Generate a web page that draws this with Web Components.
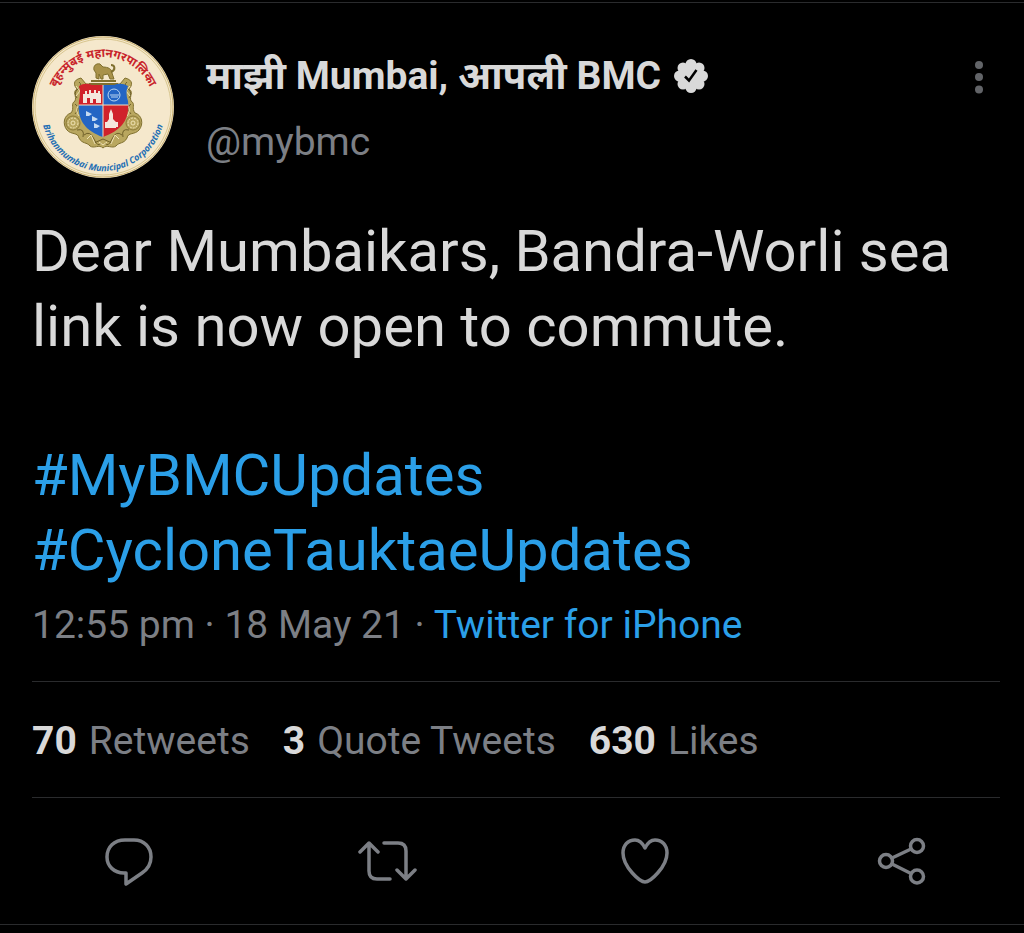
<!DOCTYPE html>
<html lang="en">
<head>
<meta charset="utf-8">
<meta name="viewport" content="width=device-width, initial-scale=1">
<title>Tweet</title>
<style>
    body {
        margin: 0;
        background: #000;
        color: #d9d9d9;
        font-family: Roboto, "Noto Sans", "Noto Sans Devanagari", sans-serif;
        --muted: #7c7f85;
        --link: #2b9fe8;
        --line: #2a2b2d;
    }
</style>
</head>
<body>
<tweet-card>
    <tweet-author slot="author" handle="@mybmc">माझी Mumbai, आपली BMC</tweet-author>
    <tweet-text slot="text">
        <p>Dear Mumbaikars, Bandra-Worli sea link is now open to commute.</p>
        <p><a href="#MyBMCUpdates">#MyBMCUpdates</a> <a href="#CycloneTauktaeUpdates">#CycloneTauktaeUpdates</a></p>
    </tweet-text>
    <tweet-meta slot="meta" source="Twitter for iPhone">12:55 pm · 18 May 21 · </tweet-meta>
    <tweet-stat slot="stats" count="70">Retweets</tweet-stat>
    <tweet-stat slot="stats" count="3">Quote Tweets</tweet-stat>
    <tweet-stat slot="stats" count="630">Likes</tweet-stat>
    <tweet-action slot="actions" icon="reply" label="Reply"></tweet-action>
    <tweet-action slot="actions" icon="retweet" label="Retweet"></tweet-action>
    <tweet-action slot="actions" icon="like" label="Like"></tweet-action>
    <tweet-action slot="actions" icon="share" label="Share"></tweet-action>
</tweet-card>

<script>
// stroke icons, all on a 60x60 grid
const ICONS = {
    reply: '<path d="M25 9H34C44 9 51 16 51 26C51 33 48 38 42 42L26 53V42H24C14 42 7 35 7 26C7 16 14 9 25 9Z"/>',
    retweet: '<path d="M3 21L12 12L21 21M12 12V40Q12 48 20 48H33M27 12H41Q49 12 49 20V48M40 39L49 48L58 39"/>',
    like: '<path d="M30 51C25 51 8 36 8 22C8 14 13 9 20 9C25 9 28 13 30 17C32 13 35 9 40 9C47 9 52 14 52 22C52 36 35 51 30 51Z"/>',
    share: '<circle cx="14" cy="30" r="6.500"/><circle cx="45" cy="15" r="6.500"/><circle cx="45" cy="45.500" r="6.500"/><path d="M20 27L39 18M20 33L39 42.500"/>'
};

class TweetAvatar extends HTMLElement {
    constructor () {
        super();

        this.attachShadow({ mode: 'open' }).innerHTML = `
        <style>
            :host {
                display: block;
                flex: none;
                width: 142px;
                height: 142px;
            }
            svg {
                display: block;
                width: 100%;
                height: 100%;
            }
            .hindi {
                font: bold 12px "Noto Sans", "Noto Sans Devanagari", sans-serif;
                fill: #c8242b;
            }
            .english {
                font: italic bold 9px "Open Sans", "Noto Sans", sans-serif;
                fill: #1f6fb4;
            }
        </style>
        <svg viewBox="0 0 142 142" role="img" aria-label="Brihanmumbai Municipal Corporation">
            <defs>
                <path id="top-arc" d="M20 72A51 51 0 0 1 122 72"/>
                <path id="bottom-arc" d="M10 62A62 62 0 1 0 132 62"/>
                <clipPath id="shield"><path d="M47 50Q53 46 60 49H82Q89 46 96 50Q93 57 96 65C98 83 90 94 71 101C52 94 45 83 47 65Q49 57 47 50Z"/></clipPath>
            </defs>
            <circle cx="71" cy="71" r="71" fill="#f5e8cc"/>
            <circle cx="71" cy="71" r="70" fill="none" stroke="#c9b06e" stroke-width="1"/>
            <circle cx="71" cy="71" r="68" fill="none" stroke="#d8c68f" stroke-width="1"/>
            <!-- gold mantling -->
            <path fill="#b9a75f" stroke="#80702f" stroke-width="1" d="M49 42C40 44 42 50 45 53C40 56 45 60 43 65C38 68 43 72 39 77C32 79 30 88 35 94C39 99 46 96 47 102C50 108 55 106 58 110C62 113 67 108 71 112C75 108 80 113 84 110C87 106 92 108 95 102C96 96 103 99 107 94C112 88 110 79 103 77C99 72 104 68 99 65C97 60 102 56 97 53C100 50 102 44 93 42L88 48H54Z"/>
            <!-- lion on the crest -->
            <path fill="#a9924a" stroke="#80702f" stroke-width="1" d="M64 42V37L62 34C61 30 64 27 68 28L71 31C76 31 80 33 80 37L82 43H78L76 38L71 39V43H69L67 38V43Z"/>
            <path d="M79 36C84 34 83 29 79 29M59 45H84M57 48H86" fill="none" stroke="#80702f" stroke-width="2"/>
            <g fill="none" stroke="#6f602a" stroke-width="1">
                <path d="M47 46Q51 49 46 53T45 62M95 46Q91 49 96 53T97 62M43 68Q49 72 43 78M99 68Q93 72 99 78M45 94Q53 92 51 101M97 94Q89 92 91 101M52 99Q58 94 62 103T69 107M90 99Q84 94 80 103T73 107M62 107L71 103L80 107"/>
                <circle cx="41" cy="87" r="7" stroke="#8c7a38"/>
                <circle cx="101" cy="87" r="7" stroke="#8c7a38"/>
            </g>
            <g fill="none" stroke="#f0e3b5" stroke-width="1">
                <path d="M44 50L48 55L44 60M98 50L94 55L98 60M46 70Q43 75 47 80M96 70Q99 75 95 80M55 103L59 99L63 108M87 103L83 99L79 108M67 106L71 109L75 106"/>
                <circle cx="41" cy="87" r="5" stroke-dasharray="2 1"/>
                <circle cx="101" cy="87" r="5" stroke-dasharray="2 1"/>
                <circle cx="41" cy="87" r="2"/>
                <circle cx="101" cy="87" r="2"/>
            </g>
            <g clip-path="url(#shield)">
                <path fill="#d0222b" d="M44 44H71V69H44ZM71 69H99V102H71Z"/>
                <path fill="#2465c4" d="M71 44H99V69H71ZM44 69H71V102H44Z"/>
                <path d="M44 69H99M71 44V102" stroke="#f0dfc0" stroke-width="1"/>
            </g>
            <g fill="#f5e6dc">
                <path d="M51 67V58H53V55H55V58H57V54H59V57H62V54H64V57H66V55H68V58H69V67H64V63H61V67H58V62H55V67Z"/>
                <path d="M79 73L81 78V83L84 86V92H75V86L77 83V78ZM73 86H76V92H73ZM83 86H86V91H83Z"/>
                <path d="M54 75L60 78L57 80H54ZM60 80L66 83L63 85H60ZM62 87L68 90L65 92H62Z" fill="#c5daf2"/>
            </g>
            <circle cx="82" cy="59" r="6" fill="none" stroke="#bad5ef" stroke-width="1"/>
            <path d="M78 59H87M79 61H86" stroke="#bad5ef" stroke-width="1"/>
            <text class="hindi" text-anchor="middle"><textPath href="#top-arc" startOffset="50%">बृहन्मुंबई महानगरपालिका</textPath></text>
            <text class="english" text-anchor="middle"><textPath href="#bottom-arc" startOffset="50%">Brihanmumbai Municipal Corporation</textPath></text>
        </svg>
`;
    }
}

class TweetAuthor extends HTMLElement {
    constructor () {
        super();

        this.attachShadow({ mode: 'open' }).innerHTML = `
        <style>
            :host {
                display: flex;
                align-items: flex-start;
                gap: 32px;
            }
            .names {
                flex: 1;
                min-width: 0;
                padding-top: 16px;
            }
            .name {
                display: flex;
                align-items: center;
                gap: 13px;
                margin: 0;
                font-size: 39px;
                line-height: 48px;
                font-weight: 700;
            }
            .name svg {
                flex: none;
                width: 34px;
                height: 34px;
            }
            .handle {
                margin-top: 18px;
                font-size: 39px;
                line-height: 48px;
                color: var(--muted);
            }
            button {
                width: 42px;
                height: 48px;
                margin-top: 17px;
                padding: 0;
                border: 0;
                background: none;
                color: #626468;
            }
            button svg {
                display: block;
                width: 42px;
                height: 48px;
            }
        </style>
        <tweet-avatar></tweet-avatar>
        <div class="names">
            <h1 class="name">
                <span><slot></slot></span>
                <svg viewBox="0 0 34 34" role="img" aria-label="Verified account">
                    <g fill="#d9d9d9">
                        <circle cx="17" cy="17" r="13"/>
                        <circle cx="17" cy="5.500" r="5.500"/><circle cx="25" cy="9" r="5.500"/>
                        <circle cx="28.500" cy="17" r="5.500"/><circle cx="25" cy="25" r="5.500"/>
                        <circle cx="17" cy="28.500" r="5.500"/><circle cx="9" cy="25" r="5.500"/>
                        <circle cx="5.500" cy="17" r="5.500"/><circle cx="9" cy="9" r="5.500"/>
                    </g>
                    <path d="M11 17.500L15 21.500L22.500 11" fill="none" stroke="#000" stroke-width="2.500"/>
                </svg>
            </h1>
            <div class="handle"></div>
        </div>
        <button type="button" aria-label="More">
            <svg viewBox="0 0 42 48" fill="currentColor">
                <circle cx="21" cy="12" r="4"/><circle cx="21" cy="24" r="4"/><circle cx="21" cy="36.500" r="4"/>
            </svg>
        </button>
`;
        this.shadowRoot.querySelector('.handle').textContent = this.getAttribute('handle');
    }
}

class TweetText extends HTMLElement {
    constructor () {
        super();

        this.attachShadow({ mode: 'open' }).innerHTML = `
        <style>
            :host {
                display: block;
                font-size: 58px;
                line-height: 75px;
            }
            ::slotted(p) {
                margin: 0 0 74px;
            }
            ::slotted(p:last-child) {
                margin: 0;
            }
        </style>
        <slot></slot>
`;
        // links sit below the slotted paragraphs, out of reach of ::slotted
        this.querySelectorAll('a').forEach((link) => {
            link.style.color = 'var(--link)';
            link.style.textDecoration = 'none';
        });
    }
}

class TweetMeta extends HTMLElement {
    constructor () {
        super();

        this.attachShadow({ mode: 'open' }).innerHTML = `
        <style>
            :host {
                display: block;
                font-size: 39px;
                line-height: 48px;
                color: var(--muted);
            }
            a {
                color: var(--link);
                text-decoration: none;
            }
        </style>
        <slot></slot><a href="#source"></a>
`;
        this.shadowRoot.querySelector('a').textContent = this.getAttribute('source');
    }
}

class TweetStat extends HTMLElement {
    constructor () {
        super();

        this.attachShadow({ mode: 'open' }).innerHTML = `
        <style>
            :host {
                display: block;
                font-size: 39px;
                line-height: 48px;
            }
            a {
                display: flex;
                gap: 12px;
                color: var(--muted);
                text-decoration: none;
            }
            b {
                color: #d9d9d9;
            }
        </style>
        <a href="#stat"><b></b> <span><slot></slot></span></a>
`;
        this.shadowRoot.querySelector('b').textContent = this.getAttribute('count');
    }
}

class TweetAction extends HTMLElement {
    constructor () {
        super();

        this.attachShadow({ mode: 'open' }).innerHTML = `
        <style>
            :host {
                display: block;
            }
            button {
                display: block;
                padding: 0;
                border: 0;
                background: none;
                color: var(--muted);
            }
            svg {
                display: block;
                width: 60px;
                height: 60px;
            }
        </style>
        <button type="button" aria-label="${this.getAttribute('label')}">
            <svg viewBox="0 0 60 60" fill="none" stroke="currentColor" stroke-width="3.500" stroke-linecap="round" stroke-linejoin="round">${ICONS[this.getAttribute('icon')]}</svg>
        </button>
`;
    }
}

class TweetCard extends HTMLElement {
    constructor () {
        super();

        this.attachShadow({ mode: 'open' }).innerHTML = `
        <style>
            :host {
                display: block;
                padding-top: 2px;
            }
            article {
                padding: 33px 24px 0 32px;
                border-top: 1px solid var(--line);
                border-bottom: 1px solid var(--line);
            }
            .text {
                margin-top: 36px;
            }
            .meta {
                margin-top: 13px;
                padding-bottom: 32px;
                border-bottom: 1px solid var(--line);
            }
            .stats {
                display: flex;
                flex-wrap: wrap;
                gap: 33px;
                padding: 35px 0 32px;
                border-bottom: 1px solid var(--line);
            }
            .actions {
                display: flex;
                justify-content: space-between;
                padding: 33px 68px 33px;
            }
        </style>
        <article>
            <slot name="author"></slot>
            <div class="text"><slot name="text"></slot></div>
            <div class="meta"><slot name="meta"></slot></div>
            <div class="stats"><slot name="stats"></slot></div>
            <div class="actions"><slot name="actions"></slot></div>
        </article>
`;
    }
}

customElements.define('tweet-avatar', TweetAvatar);
customElements.define('tweet-author', TweetAuthor);
customElements.define('tweet-text', TweetText);
customElements.define('tweet-meta', TweetMeta);
customElements.define('tweet-stat', TweetStat);
customElements.define('tweet-action', TweetAction);
customElements.define('tweet-card', TweetCard);
</script>
</body>
</html>
